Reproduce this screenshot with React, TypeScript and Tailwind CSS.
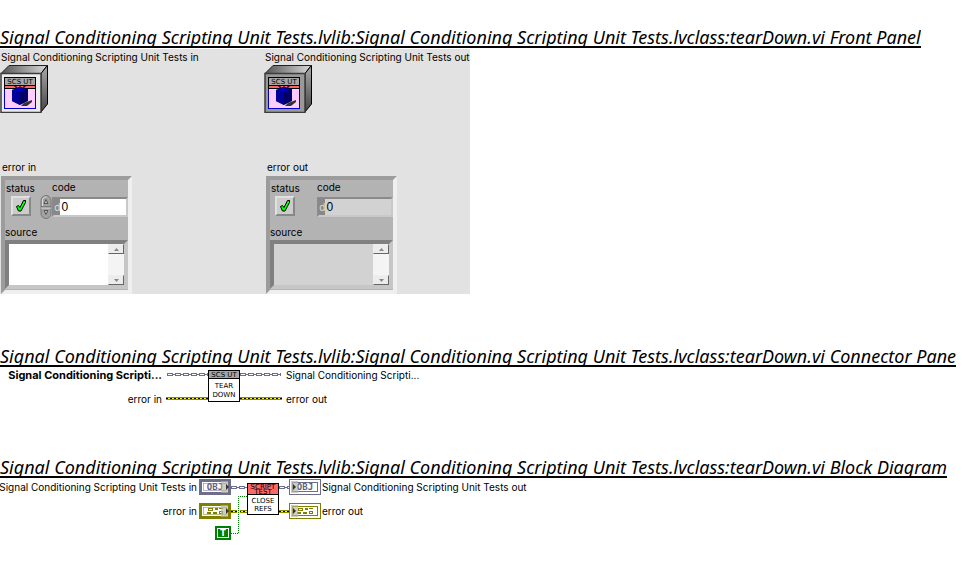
import { useId } from "react";
import type { ReactNode } from "react";

const OWNER =
  "Signal Conditioning Scripting Unit Tests.lvlib:Signal Conditioning Scripting Unit Tests.lvclass:tearDown.vi";

const LABEL = "text-[10px] leading-[14px] whitespace-nowrap";

function Title({ children }: { children: ReactNode }) {
  return (
    <h2 className="h-[22px] w-fit overflow-hidden border-b-2 border-black font-['Noto_Sans',sans-serif] text-[18px] leading-[23px] whitespace-nowrap italic">
      {OWNER} {children}
    </h2>
  );
}

function ClassBanner({ x, y }: { x: number; y: number }) {
  return (
    <g>
      <rect x={x + 0.5} y={y + 0.5} width="31" height="8" fill="#a6a6a6" stroke="#000" />
      <text
        x={x + 16}
        y={y + 7}
        textAnchor="middle"
        className="font-['DejaVu_Sans',sans-serif] text-[7px]"
      >
        SCS UT
      </text>
    </g>
  );
}

function ObjectBox({ face, id }: { face: string; id: string }) {
  return (
    <svg width="48" height="48" viewBox="0 0 48 48" role="img" aria-label="LabVIEW object">
      <defs>
        <linearGradient id={`${id}t`}>
          <stop offset="0" stopColor="#555" />
          <stop offset="1" stopColor="#d8d8d8" />
        </linearGradient>
        <linearGradient id={`${id}s`} x1="0" y1="0" x2="0" y2="1">
          <stop offset="0" stopColor="#aaa" />
          <stop offset="1" stopColor="#444" />
        </linearGradient>
      </defs>
      <path d="M1 8.5 9 .5H47L41 8.5Z" fill={`url(#${id}t)`} stroke="#222" />
      <path d="M41 8.5 47.5.5V39L41 47Z" fill={`url(#${id}s)`} stroke="#000" />
      <rect x="1" y="8.5" width="40" height="39" fill={face} stroke="#3c3c3c" strokeWidth="1.5" />
      <rect x="4.5" y="21.5" width="31" height="22" fill="#fcf" stroke="#00c" />
      <rect x="4" y="20" width="32" height="4" fill="#000" />
      <rect x="5" y="21" width="30" height="2" fill="#f66" />
      <path d="M14 21h2v2h3v-1h2v1h3v-2h2" fill="none" stroke="#000" />
      <path d="M24 38 32 35V37L27 41H21Z" fill="#333" />
      <path d="M12 25 18 23 28 24V36L20 40 12 36Z" fill="#006" />
      <path d="M12 25 18 23 28 24 20 27Z" fill="#00c" />
      <path d="M12 25 20 27V40L12 36Z" fill="#000099" />
      <ClassBanner x={4} y={12} />
    </svg>
  );
}

function ScrollArrow({ up }: { up?: boolean }) {
  return (
    <button
      type="button"
      aria-label={up ? "Scroll up" : "Scroll down"}
      className="flex h-[10px] w-4 items-center justify-center border border-t-[#eee] border-r-[#666] border-b-[#666] border-l-[#eee] bg-[#ececec]"
    >
      <svg width="5" height="3" viewBox="0 0 5 3">
        <path d={up ? "M0 3 2.5 0 5 3Z" : "M0 0H5L2.5 3Z"} fill="#888" />
      </svg>
    </button>
  );
}

function Spinner() {
  return (
    <svg width="12" height="24" viewBox="0 0 12 24" role="img" aria-label="Increment or decrement">
      <rect x="1" y=".5" width="10" height="23" rx="5" fill="#a2a2a2" stroke="#777" />
      <path d="M2.5 11V6a3.5 3.5 0 0 1 4-4" fill="none" stroke="#ddd" />
      <path d="M1 12H11" stroke="#555" />
      <path d="M1 13H11" stroke="#ddd" />
      <path d="M4 8.5 6 4.5 8 8.5Z" fill="#bbb" stroke="#444" strokeWidth=".8" />
      <path d="M4 15.5 6 19.5 8 15.5Z" fill="#bbb" stroke="#444" strokeWidth=".8" />
    </svg>
  );
}

function ErrorCluster({ name, editable }: { name: string; editable?: boolean }) {
  const id = useId();
  const fill = editable ? "bg-white" : "bg-[#d2d2d2]";
  return (
    <section className="w-[132px]">
      <h3 className={`${LABEL} pl-px`}>{name}</h3>
      <div className="mt-0.5 h-[118px] w-[131px] border-4 border-t-[#9c9c9c] border-r-[#efefef] border-b-[#efefef] border-l-[#9c9c9c] bg-[#b3b3b3]">
        <div className="flex">
          <div className="flex w-[35px] flex-col pt-px pl-px">
            <label htmlFor={`${id}s`} className={LABEL}>
              status
            </label>
            <span
              className={`mt-px grid size-5 border-2 border-t-[#e0e0e0] border-r-[#888] border-b-[#888] border-l-[#e0e0e0] bg-[#ccc] ${editable ? "ml-[5px]" : "ml-1"}`}
            >
              <input
                id={`${id}s`}
                type="checkbox"
                defaultChecked
                disabled={!editable}
                className="col-start-1 row-start-1 size-4 appearance-none"
              />
              <svg
                width="16"
                height="16"
                viewBox="0 0 16 16"
                className="pointer-events-none col-start-1 row-start-1"
              >
                <path
                  d="M3.5 8.5 5.5 7.5 7 9.5 10.5 2.5H12.5V4.5L8 13H5.5Z"
                  fill="#0f0"
                  stroke="#000"
                />
              </svg>
            </span>
          </div>
          <div className="flex flex-1 flex-col">
            <label htmlFor={`${id}c`} className={`${LABEL} pl-3`}>
              code
            </label>
            <div className="mt-px flex items-center">
              <span className="h-6 w-3">{editable && <Spinner />}</span>
              <div
                className={`flex h-5 min-w-0 flex-1 border-2 border-t-[#8a8a8a] border-r-[#c8c8c8] border-b-[#c8c8c8] border-l-[#8a8a8a] ${fill}`}
              >
                <span className="w-[7px] bg-[#888] text-center text-[10px] leading-4 text-[#ddd]">
                  d
                </span>
                <input
                  id={`${id}c`}
                  defaultValue="0"
                  readOnly={!editable}
                  className="w-full min-w-0 pl-px font-['Liberation_Sans',sans-serif] text-[12px] leading-4 outline-none"
                />
              </div>
            </div>
          </div>
        </div>
        <label htmlFor={`${id}m`} className={`${LABEL} mt-1.5 block`}>
          source
        </label>
        <div
          className={`mt-px flex h-[49px] border-4 border-t-[#808080] border-r-[#c6c6c6] border-b-[#c6c6c6] border-l-[#808080] ${fill}`}
        >
          <textarea
            id={`${id}m`}
            readOnly={!editable}
            className="h-full min-w-0 flex-1 resize-none text-[10px] outline-none"
          />
          <div className="flex flex-col justify-between bg-[#f4f4f4]">
            <ScrollArrow up />
            <ScrollArrow />
          </div>
        </div>
      </div>
    </section>
  );
}

function PanelColumn({
  object,
  error,
  face,
  editable,
}: {
  object: string;
  error: string;
  face: string;
  editable?: boolean;
}) {
  return (
    <div className="pt-px">
      <div className={`${LABEL} pl-px`}>{object}</div>
      <div className="mt-px h-12">
        <ObjectBox face={face} id={error.replace(" ", "")} />
      </div>
      <div className={editable ? "mt-[47px] pl-px" : "mt-[47px] pl-0.5"}>
        <ErrorCluster name={error} editable={editable} />
      </div>
    </div>
  );
}

function ObjectWire({ x1, x2, y }: { x1: number; x2: number; y: number }) {
  return (
    <g>
      <path d={`M${x1} ${y}H${x2}`} stroke="#6e6e90" strokeWidth="3" />
      <path d={`M${x1} ${y}H${x2}`} stroke="#fff" strokeWidth="1" strokeDasharray="4 4" strokeDashoffset="-1" />
      <path
        d={`M${x1 + 6} ${y - 1}H${x2}M${x1 + 6} ${y + 1}H${x2}`}
        stroke="#fff"
        strokeWidth="1"
        strokeDasharray="2 6"
      />
    </g>
  );
}

function ErrorWire({ x1, x2, y }: { x1: number; x2: number; y: number }) {
  return (
    <g>
      <path d={`M${x1} ${y}H${x2}`} stroke="#8c8c00" strokeWidth="3" />
      <path d={`M${x1} ${y}H${x2}`} stroke="#ff0" strokeWidth="1" />
      <path d={`M${x1} ${y}H${x2}`} stroke="#000" strokeWidth="1" strokeDasharray="2 2" />
    </g>
  );
}

function ConnectorPane() {
  return (
    <svg
      width="116"
      height="34"
      viewBox="0 0 116 34"
      role="img"
      aria-label="tearDown.vi connector pane"
      className="mt-px"
    >
      <ObjectWire x1={1} x2={42} y={5.5} />
      <ObjectWire x1={74} x2={115} y={5.5} />
      <ErrorWire x1={0} x2={42} y={29.5} />
      <ErrorWire x1={74} x2={116} y={29.5} />
      <rect x="42.5" y="1.5" width="31" height="31" fill="#fff" stroke="#000" />
      <ClassBanner x={42} y={1} />
      <g textAnchor="middle" className="font-['DejaVu_Sans',sans-serif] text-[7px]">
        <text x="58" y="19">TEAR</text>
        <text x="58" y="28">DOWN</text>
      </g>
    </svg>
  );
}

function Terminal({
  x,
  y,
  color,
  control,
  children,
}: {
  x: number;
  y: number;
  color: string;
  control?: boolean;
  children: ReactNode;
}) {
  return (
    <g transform={`translate(${x} ${y})`}>
      <rect width="32" height="16" fill={color} />
      {!control && <rect x="1" y="1" width="30" height="14" fill="#fff" />}
      <rect x="3.5" y="3.5" width="25" height="9" fill="#fff" stroke={control ? "#fff" : color} />
      {control && <rect x="4.5" y="4.5" width="23" height="7" fill="#fff" stroke={color} strokeWidth=".5" />}
      {children}
      <rect x={control ? 22 : 2} y="2" width="7" height="12" fill="#b5b5a0" fillOpacity=".65" />
      <path d={control ? "M27 5 30 8 27 11Z" : "M4 5 7 8 4 11Z"} fill="#333" />
    </g>
  );
}

function ObjText() {
  return (
    <text
      x="16"
      y="11"
      textAnchor="middle"
      fill="#606080"
      className="font-['DejaVu_Sans_Mono',monospace] text-[9px] font-bold"
    >
      OBJ
    </text>
  );
}

function ClusterGlyph() {
  return (
    <g fill="#808000">
      <path d="M9 5h5v3H9ZM16 5h3v2h-3ZM20 5h4v1h-4ZM8 9h4v2H8ZM14 9h4v2h-4ZM20 8h4v3h-4Z" />
      <path d="M10 6h3v1h-3ZM21 9h2v1h-2Z" fill="#fff" />
    </g>
  );
}

function BlockDiagram() {
  return (
    <svg width="122" height="62" viewBox="0 0 122 62" role="img" aria-label="tearDown.vi block diagram">
      <ObjectWire x1={32} x2={48} y={8.5} />
      <ObjectWire x1={80} x2={90} y={8.5} />
      <ErrorWire x1={32} x2={48} y={32.5} />
      <ErrorWire x1={80} x2={90} y={32.5} />
      <rect x="38" y="30" width="3" height="5" fill="#fff" />
      <path d="M32 54.5H39.5V17.5H48" fill="none" stroke="#008000" strokeDasharray="1 1" />
      <Terminal x={0} y={0} color="#6e6e8a" control>
        <ObjText />
      </Terminal>
      <Terminal x={90} y={0} color="#6e6e8a">
        <ObjText />
      </Terminal>
      <Terminal x={0} y={24} color="#808000" control>
        <ClusterGlyph />
      </Terminal>
      <Terminal x={90} y={24} color="#808000">
        <ClusterGlyph />
      </Terminal>
      <rect x="48.5" y="4.5" width="31" height="31" fill="#fff" stroke="#000" />
      <rect x="49" y="5" width="30" height="11" fill="#f66" />
      <path d="M49 15.5H79" stroke="#000" />
      <g textAnchor="middle" className="font-['DejaVu_Sans',sans-serif] text-[7px]">
        <text x="64" y="10">SCRIPT</text>
        <text x="64" y="15">TEST</text>
        <text x="64" y="24">CLOSE</text>
        <text x="64" y="32">REFS</text>
      </g>
      <rect x="16" y="47" width="16" height="14" fill="#008000" />
      <rect x="18.5" y="49.5" width="11" height="9" fill="#008000" stroke="#fff" />
      <text
        x="24"
        y="57"
        textAnchor="middle"
        fill="#fff"
        className="font-['DejaVu_Sans',sans-serif] text-[8px] font-bold"
      >
        T
      </text>
    </svg>
  );
}

export default function App() {
  return (
    <main className="overflow-hidden bg-white pt-[26px] font-['Inter','Liberation_Sans',sans-serif] text-black">
      <section>
        <Title>Front Panel</Title>
        <div className="mt-px grid h-[245px] w-[470px] grid-cols-[264px_1fr] bg-[#e2e2e2]">
          <PanelColumn
            object="Signal Conditioning Scripting Unit Tests in"
            error="error in"
            face="#ececec"
            editable
          />
          <PanelColumn
            object="Signal Conditioning Scripting Unit Tests out"
            error="error out"
            face="#999"
          />
        </div>
      </section>

      <section className="mt-[51px]">
        <Title>Connector Pane</Title>
        <div className="mt-px flex gap-1">
          <div className={`flex w-[162px] flex-col items-end gap-2.5 ${LABEL}`}>
            <span className="text-[11px] font-bold">Signal Conditioning Scripti...</span>
            <span>error in</span>
          </div>
          <ConnectorPane />
          <div className={`flex flex-col gap-2.5 ${LABEL}`}>
            <span>Signal Conditioning Scripti...</span>
            <span>error out</span>
          </div>
        </div>
      </section>

      <section className="mt-[50px]">
        <Title>Block Diagram</Title>
        <div className="mt-px flex">
          <div className={`flex w-[199px] flex-col items-end gap-2.5 pt-px pr-0.5 ${LABEL}`}>
            <span>Signal Conditioning Scripting Unit Tests in</span>
            <span>error in</span>
          </div>
          <BlockDiagram />
          <div className={`flex flex-col gap-2.5 pt-px pl-px ${LABEL}`}>
            <span>Signal Conditioning Scripting Unit Tests out</span>
            <span>error out</span>
          </div>
        </div>
      </section>
    </main>
  );
}
